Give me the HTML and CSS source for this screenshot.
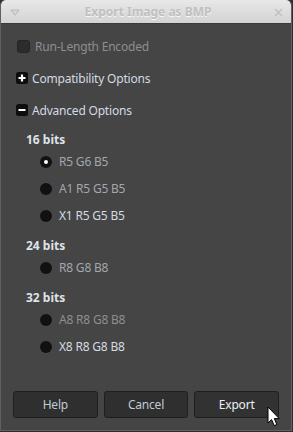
FILE: index.html
```html
<!DOCTYPE html>
<html>
<head>
<meta charset="utf-8">
<link rel="stylesheet" href="styles.css">
</head>
<body>
<div class="window">
  <div class="titlebar">
    <svg class="tb-menu" width="10" height="7" viewBox="0 0 10 7"><path d="M1 1 L9 1 L5 6 Z" fill="#d8d8d8" stroke="#bcbcbc" stroke-width="1.2" stroke-linejoin="round"/></svg>
    <span class="title">Export Image as BMP</span>
    <svg class="tb-close" width="9" height="9" viewBox="0 0 9 9"><path d="M1 1 L8 8 M8 1 L1 8" stroke="#c2c2c2" stroke-width="1.6"/></svg>
  </div>
  <div class="content">
    <div class="row">
      <span class="checkbox"></span>
      <span class="label disabled">Run-Length Encoded</span>
    </div>
    <div class="row">
      <span class="expander">
        <svg width="12" height="12" viewBox="0 0 12 12"><rect x="0" y="0" width="12" height="12" rx="2.5" fill="#0e0e0e"/><path d="M2.5 6 H9.5 M6 2.5 V9.5" stroke="#fff" stroke-width="2.2"/></svg>
      </span>
      <span class="label">Compatibility Options</span>
    </div>
    <div class="row">
      <span class="expander">
        <svg width="12" height="12" viewBox="0 0 12 12"><rect x="0" y="0" width="12" height="12" rx="2.5" fill="#0e0e0e"/><path d="M2.5 6 H9.5" stroke="#fff" stroke-width="2.2"/></svg>
      </span>
      <span class="label">Advanced Options</span>
    </div>
    <div class="groups">
      <div class="group first">
        <div class="heading">16 bits</div>
        <div class="radio-row"><span class="radio checked"></span><span class="label dim">R5 G6 B5</span></div>
        <div class="radio-row"><span class="radio"></span><span class="label dim">A1 R5 G5 B5</span></div>
        <div class="radio-row"><span class="radio"></span><span class="label">X1 R5 G5 B5</span></div>
      </div>
      <div class="group">
        <div class="heading">24 bits</div>
        <div class="radio-row"><span class="radio"></span><span class="label dim">R8 G8 B8</span></div>
      </div>
      <div class="group">
        <div class="heading">32 bits</div>
        <div class="radio-row"><span class="radio"></span><span class="label disabled">A8 R8 G8 B8</span></div>
        <div class="radio-row"><span class="radio"></span><span class="label">X8 R8 G8 B8</span></div>
      </div>
    </div>
  </div>
  <div class="buttons">
    <button class="btn">Help</button>
    <button class="btn">Cancel</button>
    <button class="btn hover">Export
      <svg class="cursor" width="14" height="22" viewBox="0 0 14 22"><path d="M1 1 L1 17 L4.6 13.6 L7.2 19.6 L9.8 18.5 L7.3 12.6 L12.2 12.6 Z" fill="#fff" stroke="#000" stroke-width="1" stroke-linejoin="round"/></svg>
    </button>
  </div>
</div>
</body>
</html>
```
FILE: styles.css
```css
html, body {
  margin: 0;
  padding: 0;
  background: #2e2e2e;
}
body {
  width: 293px;
  height: 432px;
  overflow: hidden;
  font-family: "Noto Sans", "Open Sans", sans-serif;
  font-size: 12px;
  letter-spacing: -0.2px;
}
.window {
  width: 292px;
  height: 431px;
  box-sizing: border-box;
  background: #454545;
  border: 1px solid #606060;
  border-top: none;
  border-radius: 5px 5px 0 0;
  display: flex;
  flex-direction: column;
  overflow: hidden;
}
.titlebar {
  height: 24px;
  flex: none;
  background: linear-gradient(#e8e8e8, #d3d3d3);
  border-bottom: 1px solid #3a3a3a;
  border-radius: 5px 5px 0 0;
  display: flex;
  align-items: center;
  justify-content: space-between;
  padding: 0 8px 0 9px;
  box-sizing: border-box;
  letter-spacing: 0;
}
.title {
  font-weight: bold;
  color: #c0c0c0;
  font-size: 12px;
  text-shadow: 0 1px 0 #f6f6f6;
  margin-left: 2px;
}
.tb-menu { margin-top: 2px; }
.tb-close { margin-top: 1px; }
.content {
  flex: 1;
  padding: 6px 0 0 15px;
  color: #d3dae2;
}
.row {
  display: flex;
  align-items: center;
  height: 32px;
}
.checkbox {
  width: 13px;
  height: 13px;
  box-sizing: border-box;
  background: #2c2c2c;
  border: 1px solid #242424;
  border-radius: 3px;
  margin-left: 1px;
  margin-right: 5px;
}
.expander { width: 12px; height: 12px; margin-right: 4px; display: flex; }
.label { white-space: nowrap; }
.disabled { color: #8b8e92; }
.dim { color: #a2a7ad; }
.groups { padding-left: 10px; }
.group { margin-top: 9px; }
.group.first { margin-top: 6px; }
.heading {
  font-weight: bold;
  color: #dfe3e7;
  height: 16px;
  line-height: 16px;
  letter-spacing: 0;
}
.radio-row {
  display: flex;
  align-items: center;
  height: 27px;
  padding-left: 14px;
}
.radio {
  width: 12px;
  height: 12px;
  border-radius: 50%;
  background: #111;
  margin-right: 7px;
  position: relative;
}
.radio.checked::after {
  content: "";
  position: absolute;
  left: 4px;
  top: 4px;
  width: 4px;
  height: 4px;
  border-radius: 50%;
  background: #fff;
}
.buttons {
  flex: none;
  display: flex;
  gap: 6px;
  padding: 0 12px 12px 12px;
}
.btn {
  width: 85px;
  height: 27px;
  background: #2f2f2f;
  border: 1px solid #1e1e1e;
  border-radius: 3px;
  color: #c0cad4;
  font-family: inherit;
  font-size: 12px;
  letter-spacing: -0.2px;
  padding: 0;
  position: relative;
}
.btn.hover { color: #eaf0f6; background: #323232; }
.cursor {
  position: absolute;
  left: 72px;
  top: 14px;
}
```
